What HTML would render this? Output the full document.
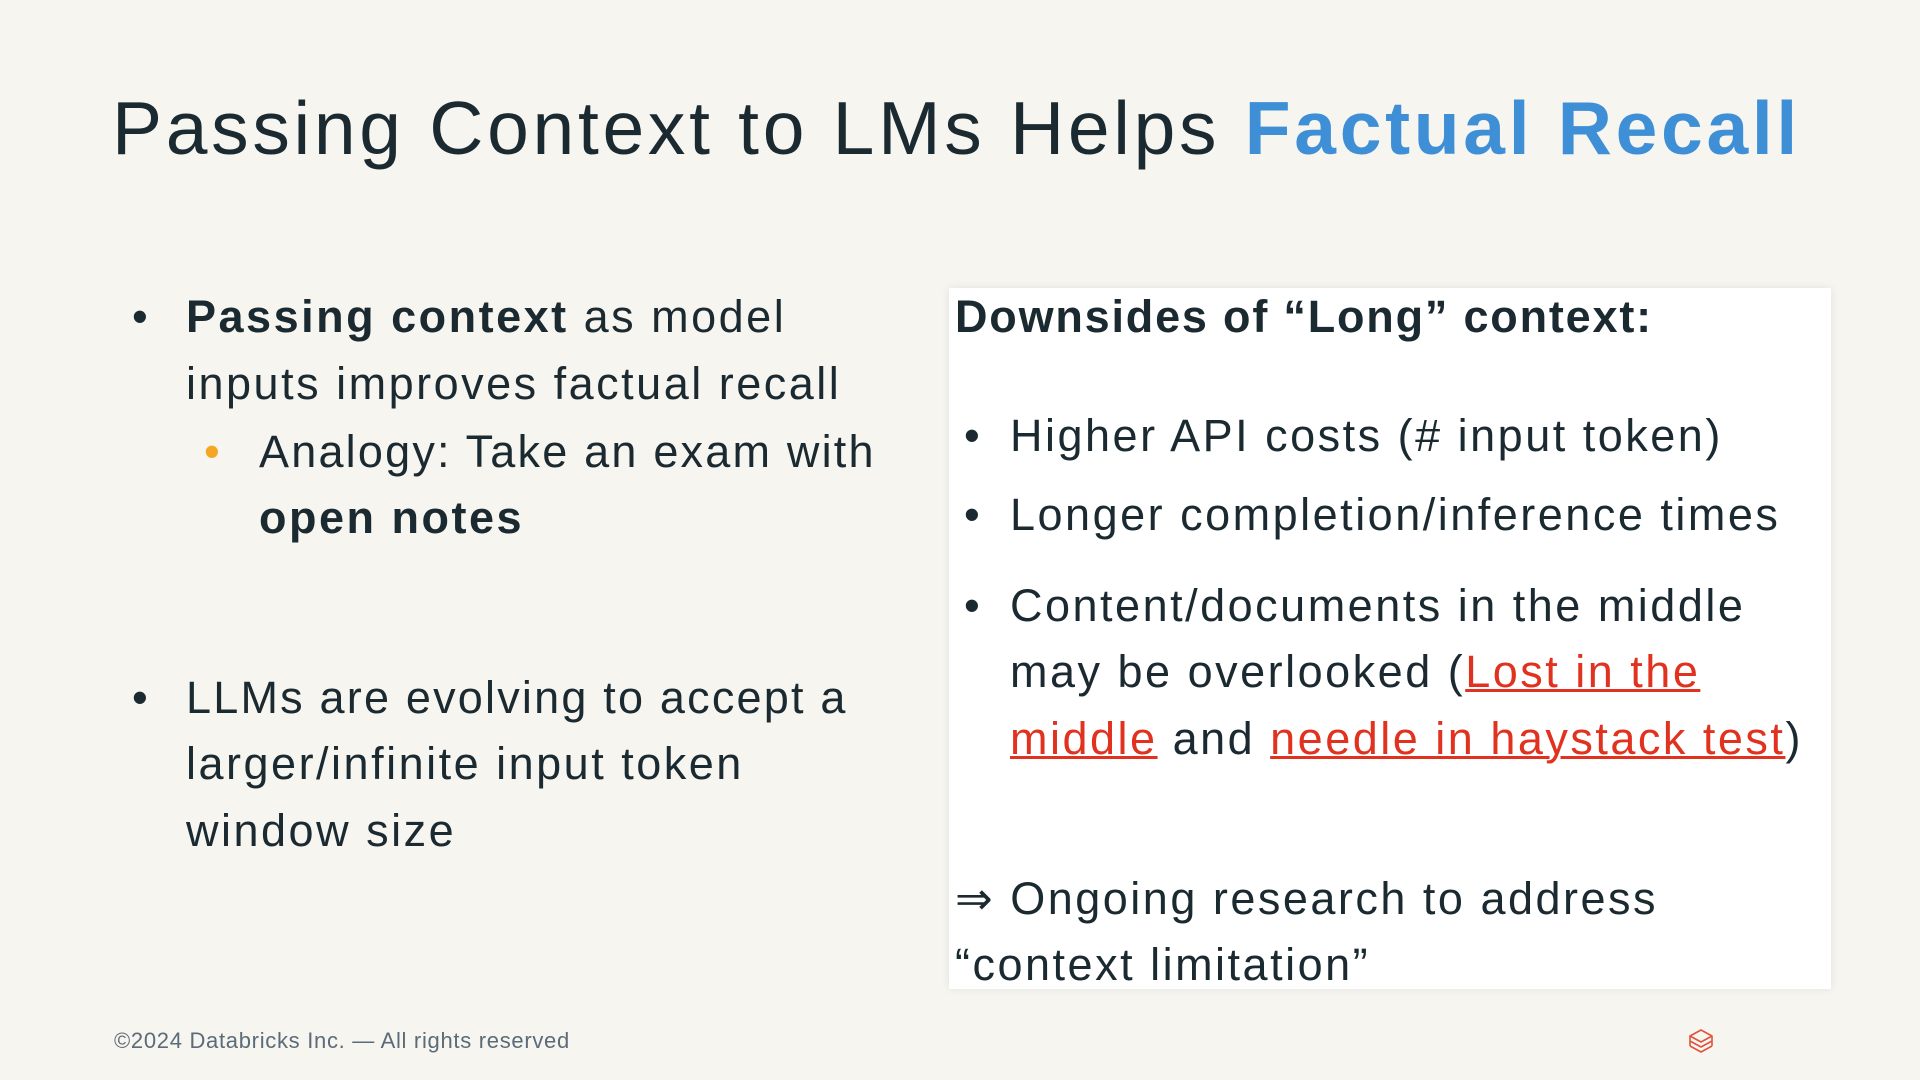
<!DOCTYPE html>
<html><head><style>
body{margin:0;width:1920px;height:1080px;background:#f6f5f0;font-family:"Liberation Sans",sans-serif;color:#1b2a31;position:relative;overflow:hidden}
.l{position:absolute;white-space:nowrap;font-size:45px;line-height:67px;letter-spacing:2.5px}
.t{position:absolute;left:112px;top:78px;font-size:75px;line-height:100px;white-space:nowrap;letter-spacing:3.7px}
.box{position:absolute;left:949px;top:288px;width:882px;height:701px;background:#fff;box-shadow:0 0 8px rgba(0,0,0,0.08)}
a{color:#e0321f;text-decoration:underline;text-decoration-thickness:3px}
</style></head><body>
<div class="t">Passing Context to LMs Helps <b style="color:#3f8fd6">Factual Recall</b></div>

<div class="l" style="left:132px;top:283px">•</div>
<div class="l" style="left:186px;top:283px"><b>Passing context</b> as model</div>
<div class="l" style="left:186px;top:350px">inputs improves factual recall</div>
<div class="l" style="left:204px;top:418px;color:#f5a623">•</div>
<div class="l" style="left:259px;top:418px;letter-spacing:2.2px">Analogy: Take an exam with</div>
<div class="l" style="left:259px;top:484px"><b>open notes</b></div>
<div class="l" style="left:132px;top:664px">•</div>
<div class="l" style="left:186px;top:664px;letter-spacing:2.2px">LLMs are evolving to accept a</div>
<div class="l" style="left:186px;top:730px">larger/infinite input token</div>
<div class="l" style="left:186px;top:797px">window size</div>

<div class="box"></div>
<div class="l" style="left:955px;top:283px;letter-spacing:1.8px"><b>Downsides of “Long” context:</b></div>
<div class="l" style="left:964px;top:402px">•</div>
<div class="l" style="left:1010px;top:402px">Higher API costs (# input token)</div>
<div class="l" style="left:964px;top:481px">•</div>
<div class="l" style="left:1010px;top:481px">Longer completion/inference times</div>
<div class="l" style="left:964px;top:572px">•</div>
<div class="l" style="left:1010px;top:572px">Content/documents in the middle</div>
<div class="l" style="left:1010px;top:638px">may be overlooked (<a>Lost in the</a></div>
<div class="l" style="left:1010px;top:705px"><a>middle</a> and <a>needle in haystack test</a>)</div>
<div class="l" style="left:955px;top:865px">⇒ Ongoing research to address</div>
<div class="l" style="left:955px;top:931px">“context limitation”</div>

<div style="position:absolute;left:114px;top:1028px;font-size:22px;color:#5b6b78;letter-spacing:0.7px">©2024 Databricks Inc. — All rights reserved</div>
<svg style="position:absolute;left:1688px;top:1028px" width="26" height="28" viewBox="0 0 26 28" fill="none" stroke="#e0533f" stroke-width="1.6" stroke-linejoin="round">
<path d="M13 2 L24 8 L13 14 L2 8 Z"/><path d="M2 13 L13 19 L24 13"/><path d="M2 18 L13 24 L24 18"/><path d="M2 8 V18 M24 8 V18"/>
</svg>
</body></html>
